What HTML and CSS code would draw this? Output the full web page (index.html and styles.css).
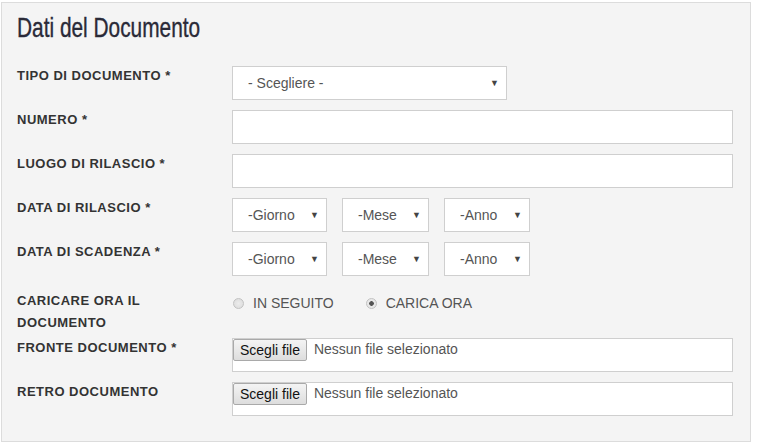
FILE: index.html
```html
<!DOCTYPE html>
<html lang="it">
<head>
<meta charset="utf-8">
<title>Dati del Documento</title>
<link rel="stylesheet" href="styles.css">
</head>
<body>
<section class="panel">
  <h2 class="title">Dati del Documento</h2>
  <form class="form">
    <label class="lbl">TIPO DI DOCUMENTO *</label>
    <div class="ctrl">
      <div class="sel sel-wide"><select><option>- Scegliere -</option></select><span class="arrow">&#9660;</span></div>
    </div>

    <label class="lbl">NUMERO *</label>
    <div class="ctrl"><input class="txt" type="text"></div>

    <label class="lbl">LUOGO DI RILASCIO *</label>
    <div class="ctrl"><input class="txt" type="text"></div>

    <label class="lbl">DATA DI RILASCIO *</label>
    <div class="ctrl dates">
      <div class="sel sel-day"><select><option>-Giorno</option></select><span class="arrow">&#9660;</span></div>
      <div class="sel sel-month"><select><option>-Mese</option></select><span class="arrow">&#9660;</span></div>
      <div class="sel sel-year"><select><option>-Anno</option></select><span class="arrow">&#9660;</span></div>
    </div>

    <label class="lbl">DATA DI SCADENZA *</label>
    <div class="ctrl dates">
      <div class="sel sel-day"><select><option>-Giorno</option></select><span class="arrow">&#9660;</span></div>
      <div class="sel sel-month"><select><option>-Mese</option></select><span class="arrow">&#9660;</span></div>
      <div class="sel sel-year"><select><option>-Anno</option></select><span class="arrow">&#9660;</span></div>
    </div>

    <label class="lbl lbl-two">CARICARE ORA IL<br>DOCUMENTO</label>
    <div class="ctrl radios">
      <span class="radio"><span class="dot"></span>IN SEGUITO</span>
      <span class="radio"><span class="dot checked"></span>CARICA ORA</span>
    </div>

    <label class="lbl">FRONTE DOCUMENTO *</label>
    <div class="ctrl file"><span class="file-btn">Scegli file</span><span class="file-name">Nessun file selezionato</span></div>

    <label class="lbl">RETRO DOCUMENTO</label>
    <div class="ctrl file"><span class="file-btn">Scegli file</span><span class="file-name">Nessun file selezionato</span></div>
  </form>
</section>
</body>
</html>
```
FILE: styles.css
```css
html, body {
  margin: 0;
  padding: 0;
  background: #ffffff;
}
body {
  padding: 2px 0 0 1px;
  font-family: "Liberation Sans", Arial, sans-serif;
}
.panel {
  box-sizing: border-box;
  width: 750px;
  height: 440px;
  background: #f4f4f4;
  border: 1px solid #dcdcdc;
  padding: 8px 16px 0 15px;
}
.title {
  display: block;
  width: 260px;
  margin: 0 0 21px 0;
  font-family: "Liberation Sans", Arial, sans-serif;
  font-weight: normal;
  font-size: 28px;
  line-height: 34px;
  color: #2a2a38;
  -webkit-text-stroke: 0.35px #2a2a38;
  transform: scaleX(0.745);
  transform-origin: left center;
  white-space: nowrap;
}
.form {
  display: grid;
  grid-template-columns: 215px 501px;
  row-gap: 10px;
}
.lbl {
  font-size: 13px;
  font-weight: bold;
  line-height: 22px;
  letter-spacing: 0.5px;
  color: #333333;
  margin-top: -1px;
}
.lbl-two {
  margin-top: 4px;
  margin-bottom: -6px;
}
.ctrl {
  height: 34px;
}
.sel {
  position: relative;
  box-sizing: border-box;
  height: 34px;
  background: #ffffff;
  border: 1px solid #cfcfcf;
}
.sel select {
  appearance: none;
  -webkit-appearance: none;
  border: 0;
  background: transparent;
  width: 100%;
  height: 32px;
  padding: 0 0 0 15px;
  margin: 0;
  font-family: "Liberation Sans", Arial, sans-serif;
  font-size: 14px;
  color: #555555;
  outline: none;
}
.arrow {
  position: absolute;
  top: 11px;
  right: 7px;
  font-size: 9px;
  line-height: 10px;
  color: #444444;
  pointer-events: none;
}
.sel-wide { width: 275px; }
.dates {
  display: flex;
  gap: 15px;
}
.sel-day { width: 95px; }
.sel-month { width: 87px; }
.sel-year { width: 86px; }
.txt {
  box-sizing: border-box;
  display: block;
  width: 501px;
  height: 34px;
  margin: 0;
  border: 1px solid #cfcfcf;
  background: #ffffff;
  outline: none;
}
.radios {
  height: 42px;
  padding-top: 8px;
  box-sizing: border-box;
  display: flex;
  align-items: flex-start;
  gap: 31px;
  font-size: 14px;
  color: #555555;
}
.radio {
  display: flex;
  align-items: center;
  gap: 9px;
  line-height: 18px;
  padding-left: 1px;
}
.dot {
  box-sizing: border-box;
  width: 11px;
  height: 11px;
  border-radius: 50%;
  border: 1px solid #c2c2c2;
  background: radial-gradient(circle, #ececec 0%, #dadada 100%);
}
.dot.checked {
  background: radial-gradient(circle, #555555 0 2px, #e8e8e8 2.6px, #e8e8e8 100%);
}
.file {
  box-sizing: border-box;
  display: flex;
  align-items: flex-start;
  padding: 0;
  background: #ffffff;
  border: 1px solid #cfcfcf;
  font-size: 14px;
}
.file-btn {
  box-sizing: border-box;
  height: 22px;
  line-height: 20px;
  padding: 0 6px;
  border: 1px solid #a9a9a9;
  border-radius: 2px;
  background: linear-gradient(#f4f4f4, #dddddd);
  color: #111111;
}
.file-name {
  line-height: 20px;
  padding-left: 7px;
  color: #555555;
}
```
